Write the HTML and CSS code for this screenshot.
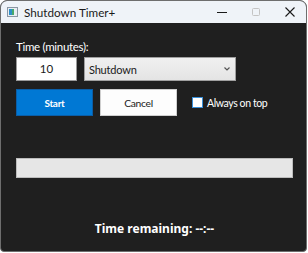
FILE: index.html
```html
<!DOCTYPE html>
<html lang="en">
<head>
  <meta charset="UTF-8">
  <title>Shutdown Timer+</title>
  <link rel="stylesheet" href="styles.css">
</head>
<body>
  <div class="window">
    <div class="titlebar">
      <svg class="app-icon" width="11" height="10" viewBox="0 0 11 10">
        <rect x="0.5" y="0.5" width="10" height="9" fill="#e8edf2" stroke="#8a96a3"/>
        <rect x="2" y="2" width="3" height="6" fill="#2e8fc9"/>
        <rect x="5" y="2" width="2" height="6" fill="#46a86c"/>
      </svg>
      <span class="title">Shutdown Timer+</span>
      <div class="caption-buttons">
        <svg class="cap" width="10" height="10" viewBox="0 0 10 10"><line x1="0" y1="5.5" x2="10" y2="5.5" stroke="#1a1a1a" stroke-width="1"/></svg>
        <svg class="cap" width="10" height="10" viewBox="0 0 10 10"><rect x="1.5" y="1.5" width="7" height="7" rx="1" fill="none" stroke="#c4c4c4"/></svg>
        <svg class="cap" width="10" height="10" viewBox="0 0 10 10"><path d="M0.5 0.5 L9.5 9.5 M9.5 0.5 L0.5 9.5" stroke="#1a1a1a" stroke-width="1.1"/></svg>
      </div>
    </div>
    <div class="client">
      <div class="label">Time (minutes):</div>
      <div class="row">
        <div class="textbox">10</div>
        <div class="combo">
          <span>Shutdown</span>
          <svg width="6" height="4" viewBox="0 0 6 4"><path d="M0.5 0.5 L3 3 L5.5 0.5" fill="none" stroke="#555" stroke-width="1.2"/></svg>
        </div>
      </div>
      <div class="row row-buttons">
        <div class="btn btn-primary">Start</div>
        <div class="btn">Cancel</div>
        <label class="check"><span class="box"></span>Always on top</label>
      </div>
      <div class="progress"></div>
      <div class="remaining">Time remaining: --:--</div>
    </div>
  </div>
</body>
</html>
```

FILE: styles.css
```css
body {
  margin: 0;
  background: #ffffff;
  font-family: Lato, "Noto Sans", sans-serif;
  font-size: 12px;
}

.window {
  width: 305px;
  height: 250px;
  border: 1px solid #6e6e6e;
  border-radius: 7px 7px 4px 4px;
  overflow: hidden;
  background: #1f1f1f;
  display: flex;
  flex-direction: column;
}

.titlebar {
  height: 22px;
  background: #eff3f8;
  display: flex;
  align-items: center;
  padding-left: 6px;
}

.app-icon {
  margin-right: 6px;
}

.title {
  color: #1a1a1a;
  font-size: 11.7px;
}

.caption-buttons {
  margin-left: auto;
  display: flex;
  align-items: center;
  gap: 24px;
  margin-right: 11px;
}

.client {
  flex: 1;
  padding: 16px 13px 0 15px;
  color: #ffffff;
}

.label {
  font-size: 11.5px;
  letter-spacing: -0.3px;
  line-height: 16px;
  margin-bottom: 2px;
}

.row {
  display: flex;
  align-items: center;
  gap: 7px;
}

.textbox {
  width: 59px;
  height: 22px;
  background: #ffffff;
  border: 1px solid #9a9a9a;
  color: #1a1a1a;
  text-align: center;
  line-height: 22px;
  font-size: 11.5px;
}

.combo {
  height: 22px;
  background: linear-gradient(#f0f0f0, #e4e4e4);
  border: 1px solid #a0a0a0;
  color: #1a1a1a;
  display: flex;
  align-items: center;
  justify-content: space-between;
  padding: 0 5px 0 4px;
  width: 141px;
  font-size: 11px;
  letter-spacing: -0.2px;
}

.row-buttons {
  margin-top: 8px;
}

.btn {
  width: 75px;
  height: 25px;
  border: 1px solid #cfcfcf;
  background: #fdfdfd;
  color: #1a1a1a;
  display: flex;
  align-items: center;
  justify-content: center;
  font-size: 10.3px;
  letter-spacing: -0.3px;
}

.btn-primary {
  background: #0078d4;
  border-color: #0a5ea8;
  color: #ffffff;
  font-weight: bold;
  font-size: 10px;
}

.check {
  display: flex;
  align-items: center;
  margin-left: 8px;
  font-size: 10.5px;
  letter-spacing: -0.4px;
  color: #ffffff;
}

.box {
  width: 9px;
  height: 9px;
  background: #ffffff;
  border: 1px solid #3a8fd8;
  margin-right: 4px;
}

.progress {
  margin-top: 42px;
  width: 275px;
  height: 18px;
  background: #e6e6e6;
  border: 1px solid #bcbcbc;
}

.remaining {
  margin-top: 43px;
  text-align: center;
  font-family: "Noto Sans", sans-serif;
  font-weight: bold;
  font-size: 12px;
  line-height: 16px;
}
```
